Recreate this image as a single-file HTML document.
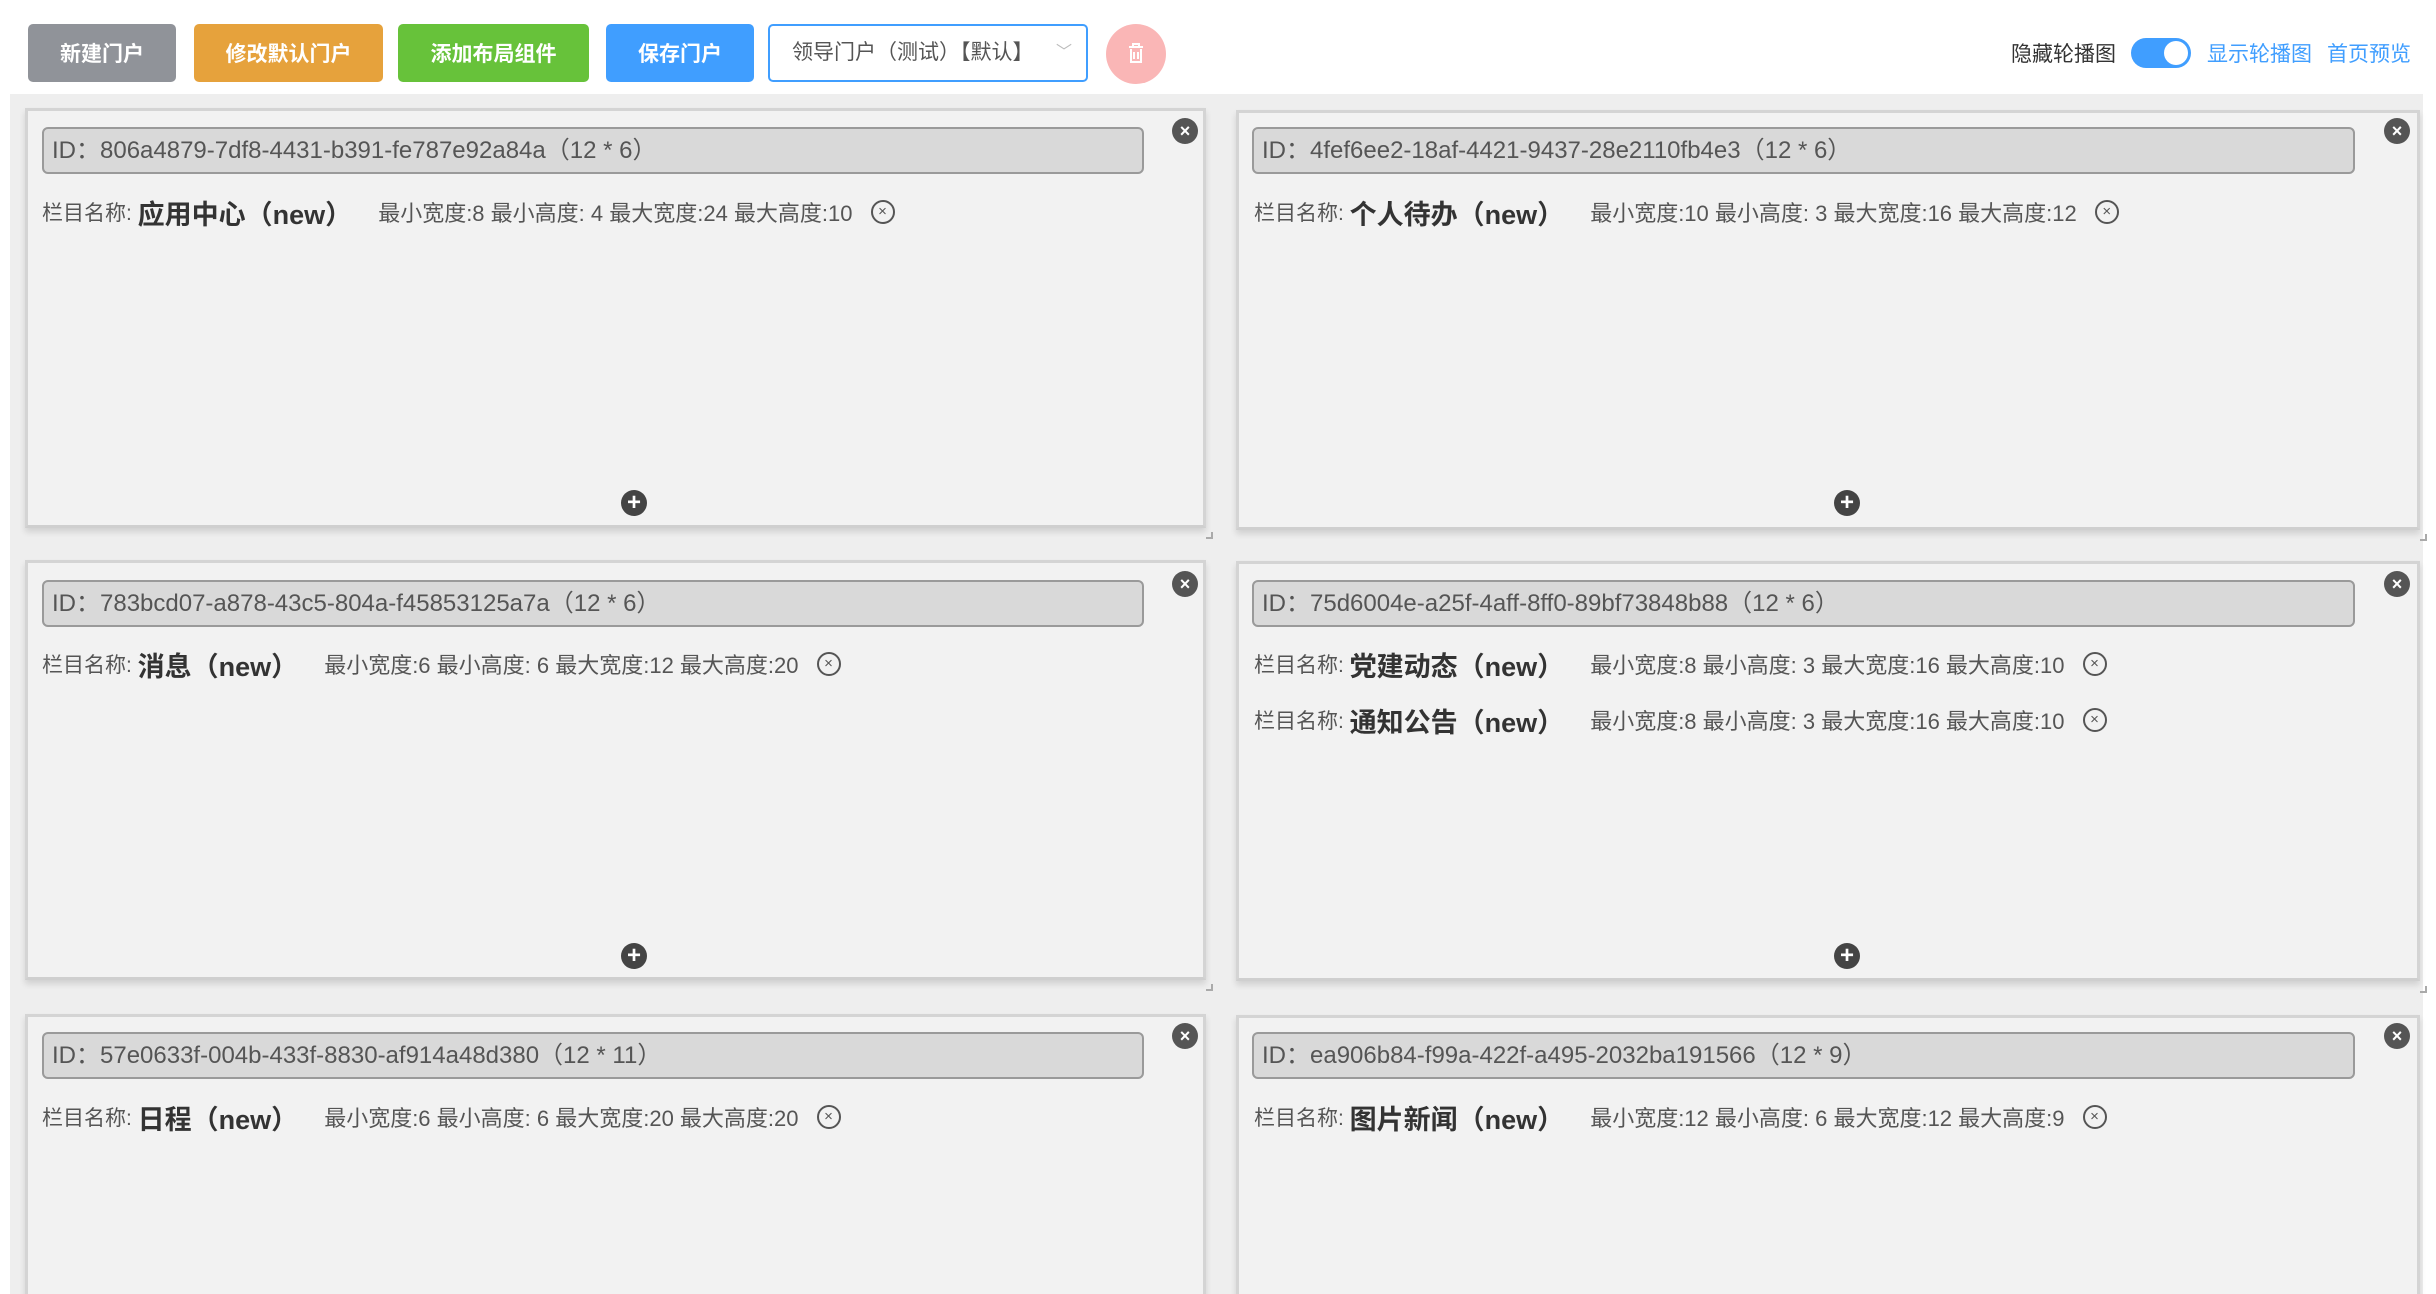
<!DOCTYPE html>
<html style="width:2436px;height:1294px;overflow:hidden"><head><meta charset="utf-8"><style>
*{margin:0;padding:0;box-sizing:border-box}
body{width:2436px;height:1294px;overflow:hidden;background:#fff;font-family:"Liberation Sans","Noto Sans CJK SC",sans-serif;position:relative;color:#333}
.btn{position:absolute;top:24px;height:58px;border-radius:5px;color:#fff;font-size:21px;font-weight:bold;display:flex;align-items:center;justify-content:center}
.area{position:absolute;left:10px;top:94px;width:2413px;height:1200px;background:#eeeeee}
.card{position:absolute;background:#f2f2f2;border:3px solid #d4d4d4;border-bottom:3px solid #cfcfcf;box-shadow:0 4px 6px rgba(0,0,0,.12);height:420px}
.id{position:absolute;height:47px;background:#d9d9d9;border:2px solid #9a9a9a;border-radius:6px;font-size:24px;color:#555;line-height:43px;padding-left:8px;white-space:nowrap}
.cl{position:absolute;width:26px;height:26px;border-radius:50%;background:#555;color:#fff;font-size:18px;font-weight:bold;line-height:26px;text-align:center}
.pl{position:absolute;width:26px;height:26px;border-radius:50%;background:#444;color:#fff;font-size:24px;font-weight:bold;line-height:25px;text-align:center}
.row{position:absolute;font-size:21px;color:#555;white-space:nowrap;display:flex;align-items:center;height:36px}
.row b{font-size:27px;color:#333;margin-right:26px}
.row i{font-style:normal;font-size:22px}
.row .c{margin-left:18px;width:24px;height:24px;border:2px solid #555;border-radius:50%;font-size:15px;line-height:19px;text-align:center;display:inline-block}
.rz{position:absolute;width:7px;height:7px;border-right:2px solid #aaa;border-bottom:2px solid #aaa}
</style></head><body>
<div class="btn" style="left:28px;width:148px;background:#909399">新建门户</div>
<div class="btn" style="left:194px;width:189px;background:#e6a23c">修改默认门户</div>
<div class="btn" style="left:398px;width:191px;background:#67c23a">添加布局组件</div>
<div class="btn" style="left:606px;width:148px;background:#409eff">保存门户</div>
<div style="position:absolute;left:768px;top:24px;width:320px;height:58px;border:2px solid #409eff;border-radius:5px;font-size:21px;color:#555;line-height:54px;padding-left:22px">领导门户（测试）【默认】<span style="position:absolute;right:14px;color:#bbb;font-size:16px">﹀</span></div>
<div style="position:absolute;left:1106px;top:24px;width:60px;height:60px;border-radius:50%;background:#fab6b6"><svg width="60" height="60" viewBox="0 0 60 60"><g fill="none" stroke="#fff" stroke-width="2"><path d="M23 23h14M27 23v-3h6v3M25 25v13h10V25M28 28v7M32 28v7"/></g></svg></div>
<div style="position:absolute;left:2011px;top:38px;font-size:21px;color:#333">隐藏轮播图</div>
<div style="position:absolute;left:2131px;top:38px;width:60px;height:30px;border-radius:15px;background:#409eff"><div style="position:absolute;right:3px;top:3px;width:24px;height:24px;border-radius:50%;background:#fff"></div></div>
<div style="position:absolute;left:2207px;top:38px;font-size:21px;color:#409eff">显示轮播图</div>
<div style="position:absolute;left:2327px;top:38px;font-size:21px;color:#409eff">首页预览</div>
<div class="area"></div>

<div class="card" style="left:25px;top:108px;width:1181px"></div>
<div class="id" style="left:42px;top:127px;width:1102px">ID：806a4879-7df8-4431-b391-fe787e92a84a（12 * 6）</div>
<div class="cl" style="left:1172px;top:118px">×</div>
<div class="row" style="left:42px;top:194px">栏目名称:&nbsp;<b>应用中心（new）</b><i>最小宽度:8 最小高度: 4 最大宽度:24 最大高度:10</i><span class="c">×</span></div>
<div class="pl" style="left:621px;top:490px">+</div>
<div class="rz" style="left:1206px;top:532px"></div>

<div class="card" style="left:1236px;top:110px;width:1184px"></div>
<div class="id" style="left:1252px;top:127px;width:1103px">ID：4fef6ee2-18af-4421-9437-28e2110fb4e3（12 * 6）</div>
<div class="cl" style="left:2384px;top:118px">×</div>
<div class="row" style="left:1254px;top:194px">栏目名称:&nbsp;<b>个人待办（new）</b><i>最小宽度:10 最小高度: 3 最大宽度:16 最大高度:12</i><span class="c">×</span></div>
<div class="pl" style="left:1834px;top:490px">+</div>
<div class="rz" style="left:2420px;top:534px"></div>

<div class="card" style="left:25px;top:560px;width:1181px"></div>
<div class="id" style="left:42px;top:580px;width:1102px">ID：783bcd07-a878-43c5-804a-f45853125a7a（12 * 6）</div>
<div class="cl" style="left:1172px;top:571px">×</div>
<div class="row" style="left:42px;top:646px">栏目名称:&nbsp;<b>消息（new）</b><i>最小宽度:6 最小高度: 6 最大宽度:12 最大高度:20</i><span class="c">×</span></div>
<div class="pl" style="left:621px;top:943px">+</div>
<div class="rz" style="left:1206px;top:984px"></div>

<div class="card" style="left:1236px;top:561px;width:1184px"></div>
<div class="id" style="left:1252px;top:580px;width:1103px">ID：75d6004e-a25f-4aff-8ff0-89bf73848b88（12 * 6）</div>
<div class="cl" style="left:2384px;top:571px">×</div>
<div class="row" style="left:1254px;top:646px">栏目名称:&nbsp;<b>党建动态（new）</b><i>最小宽度:8 最小高度: 3 最大宽度:16 最大高度:10</i><span class="c">×</span></div>
<div class="row" style="left:1254px;top:702px">栏目名称:&nbsp;<b>通知公告（new）</b><i>最小宽度:8 最小高度: 3 最大宽度:16 最大高度:10</i><span class="c">×</span></div>
<div class="pl" style="left:1834px;top:943px">+</div>
<div class="rz" style="left:2420px;top:986px"></div>

<div class="card" style="left:25px;top:1014px;width:1181px;height:290px;border-bottom:none"></div>
<div class="id" style="left:42px;top:1032px;width:1102px">ID：57e0633f-004b-433f-8830-af914a48d380（12 * 11）</div>
<div class="cl" style="left:1172px;top:1023px">×</div>
<div class="row" style="left:42px;top:1099px">栏目名称:&nbsp;<b>日程（new）</b><i>最小宽度:6 最小高度: 6 最大宽度:20 最大高度:20</i><span class="c">×</span></div>

<div class="card" style="left:1236px;top:1015px;width:1184px;height:290px;border-bottom:none"></div>
<div class="id" style="left:1252px;top:1032px;width:1103px">ID：ea906b84-f99a-422f-a495-2032ba191566（12 * 9）</div>
<div class="cl" style="left:2384px;top:1023px">×</div>
<div class="row" style="left:1254px;top:1099px">栏目名称:&nbsp;<b>图片新闻（new）</b><i>最小宽度:12 最小高度: 6 最大宽度:12 最大高度:9</i><span class="c">×</span></div>
</body></html>
